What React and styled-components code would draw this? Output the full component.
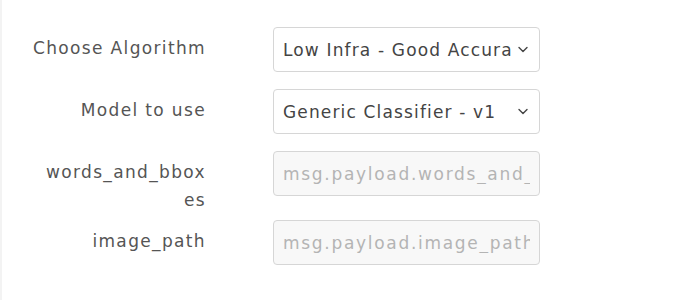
import styled, { createGlobalStyle } from "styled-components";

const Global = createGlobalStyle`
  body {
    margin: 0;
    background: #fff;
    font-family: "DejaVu Sans", sans-serif;
  }
`;

const Panel = styled.div`
  border-left: 2px solid #f3f3f3;
  padding: 27px 0 0 29px;
  height: 300px;
  box-sizing: border-box;
`;

const Row = styled.div`
  display: flex;
  align-items: flex-start;
  margin-bottom: 17px;
`;

const Label = styled.label`
  width: 175px;
  flex-shrink: 0;
  margin-right: 67px;
  padding-top: 7px;
  margin-bottom: -11px;
  text-align: right;
  font-size: 17px;
  letter-spacing: 1.35px;
  line-height: 28px;
  color: #555;
`;

const SelectWrap = styled.div`
  position: relative;
  width: 267px;
`;

const Select = styled.select`
  appearance: none;
  width: 100%;
  height: 45px;
  box-sizing: border-box;
  border: 1px solid #d6d6d6;
  border-radius: 4px;
  background: #fff;
  padding: 0 28px 0 9px;
  font-family: inherit;
  font-size: 17px;
  letter-spacing: 1.15px;
  color: #444;
  outline: none;
`;

const Chevron = styled.svg`
  position: absolute;
  right: 12px;
  top: 19px;
  pointer-events: none;
`;

const Input = styled.input`
  width: 267px;
  height: 45px;
  box-sizing: border-box;
  border: 1px solid #d6d6d6;
  border-radius: 4px;
  background: #f8f8f8;
  padding: 0 9px;
  font-family: inherit;
  font-size: 17px;
  letter-spacing: 1.7px;
  color: #444;
  outline: none;

  &::placeholder {
    color: #b4b4b4;
  }
`;

function Dropdown({ options }) {
  return (
    <SelectWrap>
      <Select defaultValue={options[0]}>
        {options.map((o) => (
          <option key={o}>{o}</option>
        ))}
      </Select>
      <Chevron width="10" height="7" viewBox="0 0 10 7">
        <path d="M1 1.5 L5 5.5 L9 1.5" fill="none" stroke="#444" strokeWidth="1.4" strokeLinecap="round" strokeLinejoin="round" />
      </Chevron>
    </SelectWrap>
  );
}

export default function App() {
  return (
    <>
      <Global />
      <Panel>
        <Row>
          <Label>Choose Algorithm</Label>
          <Dropdown options={["Low Infra - Good Accuracy", "High Infra - Best Accuracy"]} />
        </Row>
        <Row>
          <Label>Model to use</Label>
          <Dropdown options={["Generic Classifier - v1", "Generic Classifier - v2"]} />
        </Row>
        <Row>
          <Label>
            words_and_bbox<wbr />es
          </Label>
          <Input placeholder="msg.payload.words_and_bboxes" />
        </Row>
        <Row>
          <Label>image_path</Label>
          <Input placeholder="msg.payload.image_path" />
        </Row>
      </Panel>
    </>
  );
}
